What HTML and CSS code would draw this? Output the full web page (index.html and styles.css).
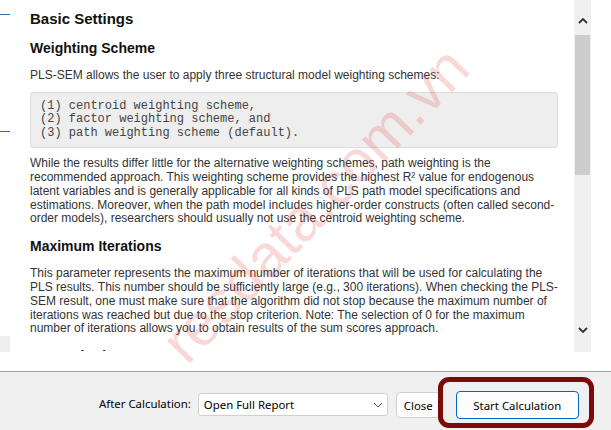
FILE: index.html
```html
<!DOCTYPE html>
<html>
<head>
<meta charset="utf-8">
<link rel="stylesheet" href="styles.css">
</head>
<body>
<div class="dialog">
  <div class="main">
    <div class="gutter">
      <span class="mark mark-top"></span>
      <span class="mark mark-mid"></span>
      <span class="tab"></span>
    </div>
    <div class="content">
      <h1>Basic Settings</h1>
      <h2>Weighting Scheme</h2>
      <p>PLS-SEM allows the user to apply three structural model weighting schemes:</p>
      <pre>(1) centroid weighting scheme,
(2) factor weighting scheme, and
(3) path weighting scheme (default).</pre>
      <p>While the results differ little for the alternative weighting schemes, path weighting is the recommended approach. This weighting scheme provides the highest R² value for endogenous latent variables and is generally applicable for all kinds of PLS path model specifications and estimations. Moreover, when the path model includes higher-order constructs (often called second-order models), researchers should usually not use the centroid weighting scheme.</p>
      <h2>Maximum Iterations</h2>
      <p>This parameter represents the maximum number of iterations that will be used for calculating the PLS results. This number should be sufficiently large (e.g., 300 iterations). When checking the PLS-SEM result, one must make sure that the algorithm did not stop because the maximum number of iterations was reached but due to the stop criterion. Note: The selection of 0 for the maximum number of iterations allows you to obtain results of the sum scores approach.</p>
      <h2>Stop Criterion</h2>
      <p>The PLS-SEM algorithm stops when the change in the outer weights between two consecutive iterations is smaller than this value.</p>
    </div>
    <div class="scrollbar">
      <div class="sb-btn up">
        <svg width="10" height="7" viewBox="0 0 10 7"><path d="M1 6 L5 2 L9 6" fill="none" stroke="#333" stroke-width="1.8"/></svg>
      </div>
      <div class="sb-track"><div class="sb-thumb"></div></div>
      <div class="sb-btn down">
        <svg width="10" height="7" viewBox="0 0 10 7"><path d="M1 1 L5 5 L9 1" fill="none" stroke="#333" stroke-width="1.8"/></svg>
      </div>
    </div>
  </div>
  <div class="footer">
    <label class="lbl">After Calculation:</label>
    <div class="select">
      <span>Open Full Report</span>
      <svg width="10" height="6" viewBox="0 0 10 6"><path d="M1 1 L5 5 L9 1" fill="none" stroke="#555" stroke-width="1"/></svg>
    </div>
    <button class="btn close">Close</button>
    <div class="highlight">
      <button class="btn primary">Start Calculation</button>
    </div>
  </div>
  <div class="watermark">resdata.com.vn</div>
</div>
</body>
</html>
```
FILE: styles.css
```css
* { box-sizing: border-box; }
html, body { margin: 0; padding: 0; }
body { width: 611px; height: 430px; overflow: hidden; background: #f0f0f0; }
.dialog { position: relative; width: 611px; height: 430px; display: flex; flex-direction: column; }
.main {
  height: 372px; flex: none; background: #fff; border-bottom: 1px solid #a0a0a0;
  display: flex; align-items: flex-start;
}
.gutter { width: 30px; height: 352px; display: flex; flex-direction: column; flex: none; }
.mark { display: block; width: 10px; height: 1px; background: #2b6cb0; }
.mark-top { margin-top: 14px; }
.mark-mid { margin-top: 116px; }
.tab { display: block; width: 10px; height: 16px; background: #efefef; margin-top: 204px; }
.content {
  width: 544px; height: 351px; overflow: hidden; flex: none;
  padding-right: 16px;
  font-family: "Liberation Sans", Arial, sans-serif; color: #333;
}
h1 { font-size: 15px; font-weight: bold; color: #111; margin: 10px 0 0; line-height: 18px; }
h2 { font-size: 14px; font-weight: bold; color: #111; margin: 11px 0 0; line-height: 18px; }
p { font-size: 12px; line-height: 13.8px; margin: 9px 0 0; }
h2 + p { margin-top: 12px; }
pre {
  margin: 9px 0 0; padding: 7px 9px; background: #eeeeee; border: 1px solid #dddddd; border-radius: 3px;
  font-family: "Liberation Mono", "Courier New", monospace; font-size: 12px; line-height: 13.5px; color: #444;
}
.scrollbar {
  width: 17px; height: 352px; background: #f0f0f0; flex: none;
  display: flex; flex-direction: column;
}
.sb-btn { display: flex; justify-content: center; align-items: flex-start; }
.sb-btn.up { height: 35px; padding-top: 17px; }
.sb-btn.down { height: 45px; padding-top: 20px; }
.sb-track { flex: 1; padding: 0 1px; }
.sb-thumb { height: 140px; background: #cdcdcd; }
.footer {
  flex: 1; display: flex; align-items: flex-start; padding-left: 99px;
  font-family: "Noto Sans", "Segoe UI", sans-serif; font-size: 11.4px; color: #000;
}
.lbl { margin: 24px 7px 0 0; line-height: 16px; }
.select {
  margin-top: 21px;
  width: 190px; height: 23px; background: #fff; border: 1px solid #cfcfcf; border-radius: 3px;
  display: flex; align-items: center; justify-content: space-between; padding: 0 4px 0 5px;
}
.btn {
  font-family: "Noto Sans", "Segoe UI", sans-serif; font-size: 11.4px; color: #000;
  background: #fdfdfd; border: 1px solid #d0d0d0; border-radius: 4px; padding: 0;
}
.close { margin: 20px 0 0 8px; width: 45px; height: 26px; }
.highlight {
  margin: 5px 0 0 -3px; width: 156px; height: 51px; position: relative;
  border: 5px solid #7d0a0a; border-radius: 11px; padding: 9px 10px 4px 13px; display: flex;
}
.primary { width: 123px; height: 28px; border: 1px solid #0067c0; }
.watermark {
  position: absolute; left: 110px; top: 170px; font-family: "Liberation Sans", Arial, sans-serif;
  font-size: 60px; color: rgba(230, 60, 60, 0.2); transform: rotate(-46deg); transform-origin: center;
  white-space: nowrap; pointer-events: none;
}
```
